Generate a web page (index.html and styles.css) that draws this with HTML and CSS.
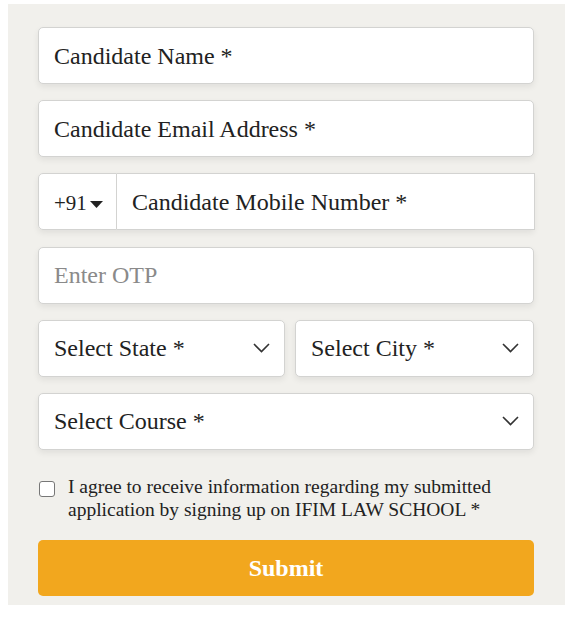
FILE: index.html
```html
<!DOCTYPE html>
<html lang="en">
<head>
<meta charset="utf-8">
<title>Enquiry Form</title>
<link rel="stylesheet" href="styles.css">
</head>
<body>
<form class="panel">
  <div class="field"><span class="label">Candidate Name *</span></div>
  <div class="field"><span class="label">Candidate Email Address *</span></div>
  <div class="phone">
    <div class="code"><span>+91</span><svg class="caret" width="13" height="7" viewBox="0 0 13 7"><polygon points="0,0 13,0 6.5,7" fill="#222"/></svg></div>
    <div class="phone-input"><span class="label">Candidate Mobile Number *</span></div>
  </div>
  <div class="field"><span class="label placeholder">Enter OTP</span></div>
  <div class="pair">
    <div class="field select"><span class="label">Select State *</span><svg class="chev" width="17" height="10" viewBox="0 0 17 10"><polyline points="1,1 8.5,8.5 16,1" fill="none" stroke="#333" stroke-width="1.6"/></svg></div>
    <div class="field select"><span class="label">Select City *</span><svg class="chev" width="17" height="10" viewBox="0 0 17 10"><polyline points="1,1 8.5,8.5 16,1" fill="none" stroke="#333" stroke-width="1.6"/></svg></div>
  </div>
  <div class="field select"><span class="label">Select Course *</span><svg class="chev" width="17" height="10" viewBox="0 0 17 10"><polyline points="1,1 8.5,8.5 16,1" fill="none" stroke="#333" stroke-width="1.6"/></svg></div>
  <div class="agree">
    <span class="box"></span>
    <p class="agree-text">I agree to receive information regarding my submitted application by signing up on IFIM LAW SCHOOL *</p>
  </div>
  <div class="submit">Submit</div>
</form>
</body>
</html>
```
FILE: styles.css
```css
html, body {
  margin: 0;
  padding: 0;
  background: #ffffff;
}
body {
  font-family: "Liberation Serif", "Times New Roman", serif;
  color: #222;
}
.panel {
  margin: 4px 0 0 8px;
  width: 557px;
  box-sizing: border-box;
  background: #f1f0ec;
  padding: 23px 31px 9px 30px;
  display: flex;
  flex-direction: column;
  gap: 16.2px;
}
.field {
  height: 57px;
  box-sizing: border-box;
  background: #fff;
  border: 1px solid #d3d3d1;
  border-radius: 5px;
  box-shadow: 0 3px 6px rgba(0, 0, 0, 0.07);
  display: flex;
  align-items: center;
  padding: 0 14px 0 15px;
}
.label {
  font-size: 24px;
  line-height: 1;
  color: #222;
  flex: 1;
  white-space: nowrap;
}
.placeholder {
  color: #8a8a8a;
}
.phone {
  height: 57px;
  display: flex;
  box-shadow: 0 3px 6px rgba(0, 0, 0, 0.07);
  border-radius: 5px 0 0 5px;
}
.code {
  width: 79px;
  box-sizing: border-box;
  background: #fff;
  border: 1px solid #d3d3d1;
  border-radius: 5px 0 0 5px;
  display: flex;
  align-items: center;
  padding: 4px 0 0 15px;
  gap: 3px;
  font-size: 21px;
}
.caret {
  margin-top: 2px;
}
.phone-input {
  flex: 1;
  box-sizing: border-box;
  background: #fff;
  border: 1px solid #d3d3d1;
  border-left: none;
  display: flex;
  align-items: center;
  padding: 0 0 0 15px;
  margin-right: -1px;
}
.pair {
  display: grid;
  grid-template-columns: 247px 1fr;
  gap: 10px;
}
.chev {
  flex: none;
}
.agree {
  display: flex;
  align-items: flex-start;
  gap: 13px;
  padding: 9px 0 0 1px;
}
.box {
  flex: none;
  width: 14px;
  height: 14px;
  border: 1.5px solid #777;
  border-radius: 3px;
  background: #fff;
  margin-top: 6px;
}
.agree-text {
  margin: 0;
  font-size: 19.5px;
  line-height: 23px;
  color: #222;
}
.submit {
  margin-top: 3px;
  height: 56px;
  background: #f2a71e;
  border-radius: 5px;
  color: #fff;
  font-weight: bold;
  font-size: 24px;
  display: flex;
  align-items: center;
  justify-content: center;
}
```
